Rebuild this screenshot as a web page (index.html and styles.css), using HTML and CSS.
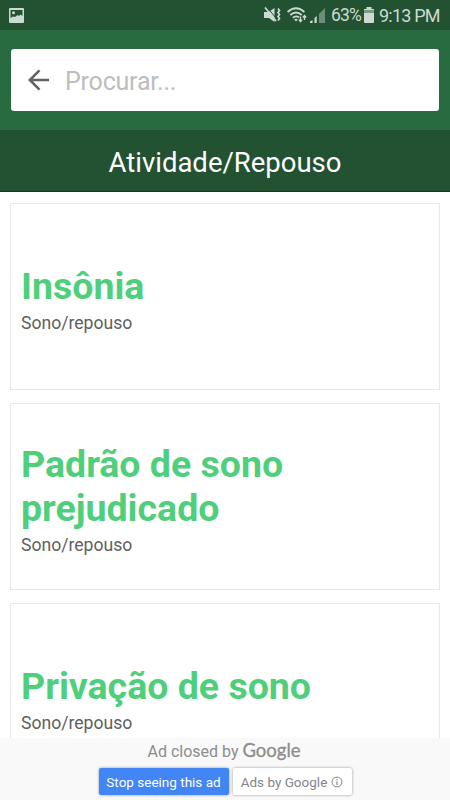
FILE: index.html
```html
<!DOCTYPE html>
<html lang="pt-BR">
<head>
  <meta charset="UTF-8">
  <meta name="viewport" content="width=device-width, initial-scale=1.0">
  <title>Atividade/Repouso</title>
  <link rel="stylesheet" href="styles.css">
</head>
<body>
  <div class="status-bar">
    <svg class="icon-picture" width="15" height="15" viewBox="0 0 15 15">
      <path fill="#cddad1" fill-rule="evenodd" d="M1 0h13a1 1 0 0 1 1 1v13a1 1 0 0 1-1 1H1a1 1 0 0 1-1-1V1a1 1 0 0 1 1-1zM1.500 2v8l2.500-1.500 2 .5 2.500-2 1.500 1 1.500-1.500 2 1.500V2z"/>
      <circle cx="4.500" cy="4.800" r="1.500" fill="#cddad1"/>
    </svg>
    <div class="status-icons">
      <svg class="icon-mute" width="17" height="16" viewBox="0 0 17 16">
        <path fill="#cddad1" d="M0 5h4.500L10.500 1v14L5 11H0z"/>
        <path stroke="#225232" stroke-width="1" d="M2.800 0l10 12"/>
        <path stroke="#cddad1" stroke-width="1.700" d="M1 .5l11 13.500"/>
        <path fill="none" stroke="#cddad1" stroke-width="1.700" d="M14 1.500l1.500 2-1.500 2 1.500 2-1.500 2 1.500 2-1.500 2"/>
      </svg>
      <svg class="icon-wifi" width="20" height="16" viewBox="0 0 20 16">
        <g fill="none" stroke="#cddad1" stroke-width="1.800">
          <path d="M.6 5Q9 -2.500 17.400 5"/>
          <path d="M3.300 8Q9 3 14.700 8"/>
          <path d="M5.900 10.800Q9 8.200 12 10.500"/>
        </g>
        <path fill="#cddad1" d="M7.200 12.500Q9 11.200 10.800 12.500L9 14.500z"/>
        <path fill="none" stroke="#cddad1" stroke-width="1.300" d="M13.500 9.500v5M11.800 12.700l1.700 2 1.700-2M17.500 13V8.500M15.800 10.500l1.700-2 1.700 2"/>
      </svg>
      <svg class="icon-signal" width="15" height="15" viewBox="0 0 15 15">
        <path fill="#cddad1" d="M0 15v-1.500L2.500 12v3zM4.500 15V10L6.700 8v7z"/>
        <path fill="#6c8d76" d="M9 15V6L15 0v15z"/>
      </svg>
      <span class="battery-level">63%</span>
      <svg class="icon-battery" width="10" height="16" viewBox="0 0 10 16">
        <path fill="#7d9a86" d="M0 2h10v4H0z"/>
        <path fill="#cddad1" d="M0 6h10v9a1 1 0 0 1-1 1H1a1 1 0 0 1-1-1zM2.500 0h5v2H10v1H0V2h2.500z"/>
      </svg>
      <span class="clock">9:13 PM</span>
    </div>
  </div>

  <header class="toolbar">
    <div class="search">
      <svg class="icon-back" width="22" height="22" viewBox="0 0 22 22">
        <path fill="none" stroke="#616161" stroke-width="2.500" d="M21 11H2.500M11.500 1.300L1.800 11l9.700 9.700"/>
      </svg>
      <input class="search-input" type="text" placeholder="Procurar...">
    </div>
  </header>

  <h1 class="page-title">Atividade/Repouso</h1>

  <main class="list">
    <article class="card">
      <h2>Insônia</h2>
      <p>Sono/repouso</p>
    </article>
    <article class="card">
      <h2>Padrão de sono prejudicado</h2>
      <p>Sono/repouso</p>
    </article>
    <article class="card">
      <h2>Privação de sono</h2>
      <p>Sono/repouso</p>
    </article>
  </main>

  <footer class="ad">
    <div class="ad-closed">Ad closed by <span class="ad-logo">Google</span></div>
    <div class="ad-buttons">
      <button class="btn btn-stop">Stop seeing this ad</button>
      <button class="btn btn-info">
        Ads by Google
        <svg class="icon-info" width="12" height="12" viewBox="0 0 12 12">
          <circle cx="6" cy="6" r="4.900" fill="none" stroke="#85858b"/>
          <path stroke="#85858b" stroke-width="1.200" d="M6 5.200V9M6 3v1.200"/>
        </svg>
      </button>
    </div>
  </footer>
</body>
</html>
```

FILE: styles.css
```css
* {
  box-sizing: border-box;
}
body {
  margin: 0;
  height: 800px;
  display: flex;
  flex-direction: column;
  overflow: hidden;
  background-color: #fff;
  font-family: Roboto, sans-serif;
}
.status-bar {
  flex: none;
  height: 30px;
  padding: 0 10px 0 9px;
  display: flex;
  align-items: center;
  justify-content: space-between;
  background-color: #225232;
  color: #cddad1;
  font-size: 18px;
}
.status-icons {
  display: flex;
  align-items: center;
}
.icon-wifi {
  margin-left: 6px;
}
.icon-signal {
  margin-left: 3px;
}
.battery-level {
  margin-left: 6px;
  width: 29px;
  font-size: 17.5px;
  letter-spacing: -0.8px;
}
.icon-battery {
  margin-left: 4px;
}
.clock {
  margin-left: 5px;
  width: 61px;
  letter-spacing: -0.8px;
  white-space: nowrap;
}
.toolbar {
  flex: none;
  height: 100px;
  padding: 19px 11px;
  background-color: #296b40;
}
.search {
  height: 62px;
  padding: 0 17px;
  display: flex;
  align-items: center;
  border-radius: 3px;
  background-color: #fff;
}
.search-input {
  flex: 1;
  min-width: 0;
  margin-left: 15px;
  padding: 2px 0 0;
  border: none;
  outline: none;
  background: none;
  font-family: inherit;
  font-size: 25px;
  letter-spacing: -0.2px;
}
.search-input::placeholder {
  color: #bdbdbd;
}
.page-title {
  flex: none;
  height: 62px;
  margin: 0;
  border-bottom: 1px solid #0d3d18;
  background-color: #225232;
  color: #fff;
  font-size: 27.5px;
  font-weight: normal;
  line-height: 66px;
  text-align: center;
}
.list {
  flex: 1;
  min-height: 0;
  padding: 11px 10px 0;
  display: flex;
  flex-direction: column;
  gap: 13px;
  overflow: hidden;
}
.card {
  flex: none;
  height: 187px;
  padding: 4px 10px 0;
  display: flex;
  flex-direction: column;
  justify-content: center;
  border: 1px solid #e8e8e8;
}
.card h2 {
  margin: 0;
  color: #4fcf7b;
  font-size: 37.5px;
  line-height: 44px;
}
.card p {
  margin: 5px 0 0;
  color: #606060;
  font-size: 17.6px;
  line-height: 21px;
}
.ad {
  flex: none;
  height: 62px;
  background-color: #f9f9f9;
}
.ad-closed {
  height: 30px;
  padding-right: 2px;
  color: #8d8d8d;
  font-size: 16px;
  line-height: 25px;
  text-align: center;
}
.ad-logo {
  font-family: Lato, sans-serif;
  font-size: 18.5px;
  -webkit-text-stroke: 0.3px #8d8d8d;
}
.ad-buttons {
  display: flex;
  justify-content: center;
  gap: 4px;
}
.btn {
  height: 27px;
  padding: 0 7px;
  display: flex;
  align-items: center;
  justify-content: center;
  border: none;
  border-radius: 2px;
  box-shadow: 0 0 3px rgba(0, 0, 0, 0.4);
  font-family: inherit;
  font-size: 13.5px;
  white-space: nowrap;
}
.btn-stop {
  width: 130px;
  background-color: #4285f4;
  color: #fff;
}
.btn-info {
  width: 119px;
  gap: 4px;
  background-color: #fff;
  color: #85858b;
}
.icon-info {
  flex: none;
}
```
